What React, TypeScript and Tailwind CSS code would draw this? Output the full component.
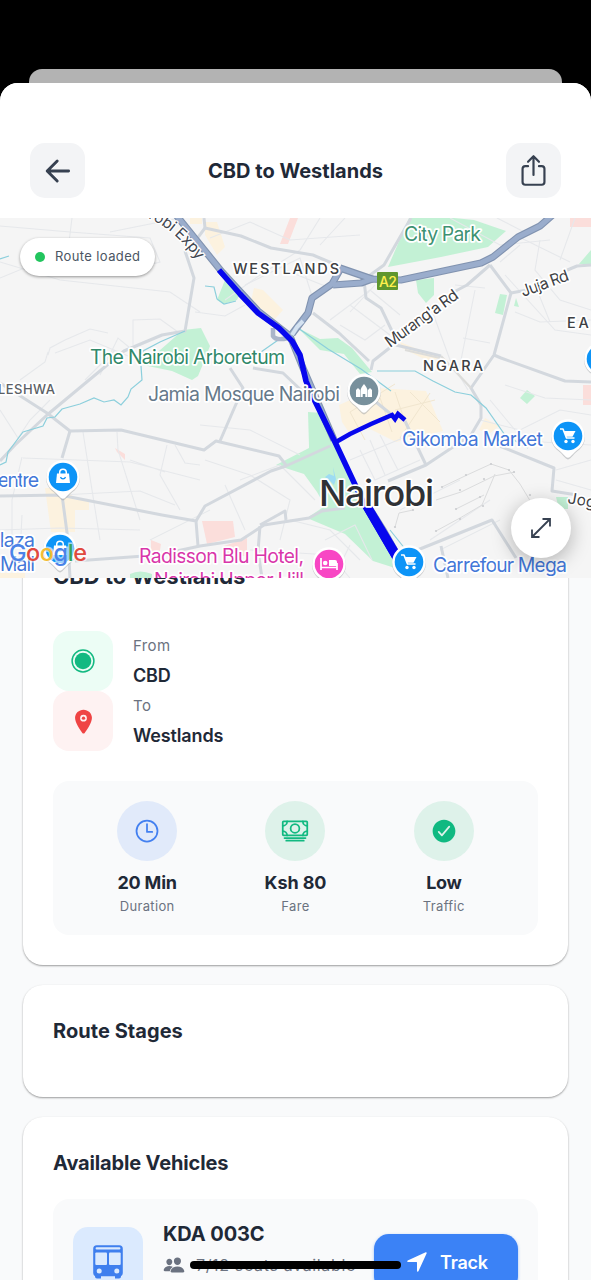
import React from "react";
import {
  IoShareOutline,
  IoLocation,
  IoTimeOutline,
  IoCashOutline,
  IoCheckmarkCircle,
  IoPeople,
  IoNavigate,
} from "react-icons/io5";

const MINOR_ROADS = [
  "M0 226 L70 232 L150 238 L160 262 L120 272",
  "M72 218 L68 250 L0 278",
  "M110 232 L180 218",
  "M0 262 L60 280 L170 292 L200 312",
  "M133 345 L133 320 L160 319 L178 332",
  "M48 355 L50 348 L65 340 L90 329 L108 333 M48 352 L45 362 L20 380",
  "M55 353 L90 340 L133 358 M100 375 L118 338 L135 352 M85 380 L115 350",
  "M0 410 L18 438 L30 420 L50 400",
  "M83 432 L92 490 L100 540 M117 432 L118 450 L140 520 M167 445 L160 475 L180 510",
  "M23 458 L130 462 L200 480 M130 460 L165 472",
  "M60 495 L140 491 L175 505 M20 555 L22 515 M0 530 L60 528 L140 530",
  "M175 445 L185 463 L200 465 M22 457 L12 500 L12 540",
  "M210 238 L250 222 L290 240 L360 235",
  "M225 300 L260 275 L300 250 L320 218",
  "M245 285 L300 258 L312 296 M285 270 L330 288",
  "M320 245 L345 218 M195 312 L225 316 L245 305",
  "M330 320 L370 290 L400 315 M350 305 L390 335 M340 325 L365 340 L385 325 M375 285 L350 312",
  "M450 218 L500 245 L550 240 M520 245 L500 262 M515 235 L570 262",
  "M540 240 L535 270 L560 300 L591 310 M505 275 L555 330 L591 335",
  "M515 312 L540 322 L591 320 M475 290 L465 340 L460 365 M535 285 L550 322",
  "M430 305 L450 360 L468 390 M463 338 L490 343 M455 285 L485 288",
  "M497 218 L530 235 M560 260 L575 218",
  "M200 425 L250 430 L300 455 M205 460 L250 475 L290 500 L280 540",
  "M225 485 L245 530 M240 480 L280 465 L315 500 M290 520 L330 530 L360 560",
  "M325 540 L355 525 L372 560 M335 575 L350 545",
  "M360 450 L375 480 L420 460 M370 440 L385 475 M380 435 L398 470 M350 460 L410 435",
  "M480 420 L520 430 L560 410 L591 415 M510 440 L591 445",
  "M556 470 L591 460 M556 480 L591 490",
  "M400 510 L460 480 M430 540 L490 500 M440 550 L500 520",
  "M505 385 L545 398 L591 400 M490 400 L515 430",
  "M250 550 L330 555 L350 578 M150 540 L210 510",
];

const SECONDARY_ROADS = [
  "M185 251 L194 278 L185 331 L162 335 L124 351 L47 415 L15 445 L0 461",
  "M0 383 L47 413 L70 431 L121 430 L204 450 L216 441 L279 456 L286 465",
  "M70 431 L62 458 M0 496 L60 495 L162 515 L196 521 L198 546",
  "M62 495 L68 540 L70 578",
  "M75 561 L158 555 L200 546 L241 540 L264 525 L309 518 L322 511 L345 508",
  "M196 521 L205 506 L271 471 L286 466 L330 446",
  "M220 441 L243 388 L230 368",
  "M253 368 L283 373 L302 391",
  "M204 218 L205 228 L241 236 L271 248 L313 255 L339 266",
  "M366 278 L384 265 L411 218 M205 228 L196 240",
  "M364 280 L366 298 L381 308 L392 331 M392 346 L373 361 L371 370",
  "M313 313 L339 333 L369 361",
  "M490 265 L467 285 L452 293",
  "M490 265 L511 293 L494 355 L471 388 L481 405 L481 418 L471 435 L426 465 L388 481",
  "M494 355 L501 358 L565 381 L591 382 M511 293 L527 290",
  "M396 345 L441 356 M565 271 L577 266 L591 265",
  "M497 445 L554 468 L552 491 L577 495",
  "M405 421 L426 465 M371 398 L392 415",
  "M415 551 L492 520 L516 558 M441 546 L448 578",
  "M260 526 L258 551 L262 578 M260 525 L285 511 L286 520",
];

const HIGHWAYS = [
  "M172 210 L222 272 L258 311 L290 336 L303 368 L334 440",
  "M292 334 L308 313 L312 298 L332 284 L341 268",
  "M333 285 L361 283 L372 279 L340 268",
  "M366 279 L401 280 L481 263 L493 257 L518 237 L540 226 L556 212",
];

function Pin({ x, y, color, children }: { x: number; y: number; color: string; children?: React.ReactNode }) {
  return (
    <g transform={`translate(${x} ${y})`}>
      <path d="M0 22.500 C-3 22 -6 16 -11.500 12.500 A17 17 0 1 1 11.500 12.500 C6 16 3 22 0 22.500Z" fill="#9da1a6" opacity=".5" transform="translate(0 1)" />
      <path d="M0 21.800 C-3 21.500 -6 16 -11.500 12.300 A16.800 16.800 0 1 1 11.500 12.300 C6 16 3 21.500 0 21.800Z" fill="#fff" />
      <circle r="14.300" fill={color} />
      {children}
    </g>
  );
}

function Cart() {
  return (
    <g>
      <path d="M-8 -7h3l3.500 9h8" fill="none" stroke="#fff" strokeWidth="1.600" strokeLinejoin="round" />
      <path d="M-4 -5h11.500l-3 5.800h-6.500z" fill="#fff" />
      <circle cx="-2" cy="5.500" r="1.700" fill="#fff" />
      <circle cx="5" cy="5.500" r="1.700" fill="#fff" />
    </g>
  );
}

function Bag() {
  return (
    <g>
      <path d="M-6 -3.500h12l1 9.500h-14z" fill="#fff" />
      <path d="M-3.300 -3v-1.500a3.300 3.300 0 0 1 6.600 0V-3" fill="none" stroke="#fff" strokeWidth="1.500" />
      <path d="M-2.500 0a2.600 2.600 0 0 0 5 0" fill="none" stroke="#0d8ff2" strokeWidth="1.200" />
    </g>
  );
}

function Label({ x, y, w, size, fill, children, weight = 400, rotate = 0 }: {
  x: number; y: number; w: number; size: number; fill: string; children: string; weight?: number; rotate?: number;
}) {
  return (
    <text
      x={x}
      y={y}
      textLength={w}
      fontSize={size}
      fontWeight={weight}
      fill={fill}
      stroke="#ffffff"
      strokeWidth="3.500"
      strokeLinejoin="round"
      paintOrder="stroke"
      transform={rotate ? `rotate(${rotate} ${x} ${y})` : undefined}
    >
      {children}
    </text>
  );
}

function MapCanvas() {
  return (
    <svg viewBox="0 218 591 360" className="block h-[360px] w-full font-['Inter',sans-serif]">
      <rect y="218" width="591" height="360" fill="#f5f5f5" />
      <g fill="#fcf2df">
        <path d="M205 222h12l8 25-8 8-12-20zM254 288l9 2 20 20-8 9-24-18zM339 405l38-17 49 3 17 40-47 11-28-14-18 6-8-12z" />
        <path d="M45 488h22l8 12v32h-24zM75 500h14v10h-14zM190 218h12v6h-12zM400 342l40 16-12 3-26-13zM485 418l14 8-10 8-10-4zM0 573h25v5H0z" />
      </g>
      <g fill="#fbdedb">
        <path d="M290 218h8l-10 26h-8zM202 521h31l2 16-28 7zM224 546l23-8v18h-25zM570 218h21v9h-21zM583 385h8v20h-8zM115 448l10 6v6l-8-8zM151 540l10 4-2 12h-8z" />
      </g>
      <g fill="#c3f1d5">
        <path d="M409 218h45l20 2 32 11-18 16-47 10-53 10zM591 250l-12 14h12z" />
        <path d="M416 280l18-2v17l-8 8-8-10zM500 294l7 1-4 20-8-2zM516 298l3 9-5-1z" />
        <path d="M143 365l40-35 18-2 9 18-7 18-5 12-6 4-20-9z" />
        <path d="M225 280l-8 20 6 4 14-4 3-6z" />
        <path d="M298 328l22 11 18-1 14 10 20 24-12 2-16-20-24-4z" />
        <path d="M308 412l14 1 35 74 22 43 16 30v8l-22-7-28-27-38-16 18-12-8-14-13-18-28-9 33-17V446z" />
        <path d="M527 390l8 6-8 8-7-6zM556 497h12v12h-9zM130 574q10-5 22 0v4h-22z" />
      </g>
      <path d="M333 467l1 9-5-2-4 3 5 4 4 4 2-6z" fill="#9ddcf3" />
      <g fill="none" stroke="#e6e8eb" strokeWidth="1.100">
        {MINOR_ROADS.map((d) => <path key={d} d={d} />)}
      </g>
      <g fill="none" stroke="#f1e6cf" strokeWidth="1">
        <path d="M365 440l-15-28 45-28M395 392l15 45M430 393l-30 45M378 392l14 40M410 392l30 30M395 410l40-10" />
      </g>
      <g fill="none" stroke="#d3d8de" strokeWidth="3" strokeLinejoin="round">
        {SECONDARY_ROADS.map((d) => <path key={d} d={d} />)}
      </g>
      <path d="M441 356L471 388M405 350L440 358" stroke="#dcdcda" strokeWidth="2.200" fill="none" />
      <g fill="none" stroke="#8ccfdc" strokeWidth="1.200">
        <path d="M185 331L160 342L143 351L141 366L142 380L131 389L128 397L121 405L114 400L104 402L94 398L80 404L62 409L55 417L47 418L43 426L23 432L8 452L6 462L0 465" />
        <path d="M0 259l9-3M205 286l9 1 3 12 7 5 12-3M261 352l20-14" />
        <path d="M298 328l30 21 33 20 30 22M377 371l38 0 18 10 22 11 16 3 15 13 19 27 23 13M390 530l16 20" />
      </g>
      <g stroke="#dbdcdd" fill="none" strokeWidth="1">
        <path d="M442 487l25-12 24-11 18 6 11 14 12 20M436 500l25-8 33-16 21-4M456 509l28-14M436 531l24-13 22-13 13-31" />
        <path d="M395 527l4-14 14-3" />
      </g>
      <g fill="#cbcdd0">
        {[[442, 487], [466, 475], [491, 464], [509, 470], [460, 490], [484, 479], [456, 509], [480, 497], [436, 531], [460, 519], [483, 506], [514, 472], [530, 495], [395, 527], [413, 510]].map(([cx, cy]) => (
          <circle key={`${cx}-${cy}`} cx={cx} cy={cy} r="1.100" />
        ))}
      </g>
      <g fill="none">
        <path d="M273 328V336Q276 341 288 338" stroke="#a9b5c9" strokeWidth="4.500" />
        <path d="M366 500L385 530L399 555" stroke="#8fa1bd" strokeWidth="4" />
      </g>
      <g fill="none" stroke="#8193b0" strokeWidth="7.200" strokeLinejoin="round">
        {HIGHWAYS.map((d) => <path key={d} d={d} />)}
      </g>
      <g fill="none" stroke="#9aadcc" strokeWidth="5" strokeLinejoin="round">
        {HIGHWAYS.map((d) => <path key={d} d={d} />)}
      </g>
      <path d="M292 335l5-8 6-6" stroke="#d4e2f1" strokeWidth="4" fill="none" />

      <g fill="none" stroke="#0707ee" strokeLinejoin="round">
        <path d="M219 270L240 294L258 313L279 328L292 341L300 355L306 381L311 393L335 442L366 508L396 559" strokeWidth="5.600" />
        <path d="M336 442L350 434L371 424L392 415L395 419L398 414L405 420" strokeWidth="4.600" strokeLinejoin="miter" />
      </g>
      <path d="M363 508L372 506L399 551L393 560Z" fill="#0707ee" />

      <rect x="377" y="272" width="21" height="18" rx="1" fill="#5f962e" />
      <text x="379" y="286.500" fontSize="14" fontWeight="500" textLength="18" fill="#fff04d">A2</text>

      <path id="expressway-label" d="M148 218Q176 230 200 264" fill="none" />
      <text fontSize="15.500" fill="#3f4650" stroke="#fff" strokeWidth="2.500" paintOrder="stroke">
        <textPath href="#expressway-label" textLength="66">robi Expy</textPath>
      </text>
      <Label x={404} y={241} w={77} size={19.5} fill="#3d9272">City Park</Label>
      <Label x={233} y={274} w={106} size={14.5} fill="#3d4043" weight={500}>WESTLANDS</Label>
      <Label x={423} y={371} w={60} size={14.5} fill="#3d4043" weight={500}>NGARA</Label>
      <Label x={567} y={328} w={34} size={14.5} fill="#3d4043" weight={500}>EAS</Label>
      <Label x={-2} y={394} w={57} size={13} fill="#5b6065" weight={500}>LESHWA</Label>
      <Label x={390} y={348} w={86} size={16} fill="#3d4043" rotate={-36}>Murang'a Rd</Label>
      <Label x={523} y={297} w={50} size={16} fill="#3d4043" rotate={-20}>Juja Rd</Label>
      <Label x={567} y={503} w={28} size={15.5} fill="#3d4043" rotate={10}>Jog</Label>
      <Label x={90} y={364} w={195} size={19.5} fill="#31896a">The Nairobi Arboretum</Label>
      <Label x={148} y={401} w={192} size={19.5} fill="#66798a">Jamia Mosque Nairobi</Label>
      <Label x={319} y={506} w={115} size={36} fill="#303236" weight={500}>Nairobi</Label>

      <Pin x={364} y={391} color="#78909c">
        <path d="M-8 6V-1l2-2 2 2v7zM4 6V-1l2-2 2 2v7zM-3.500 6V0q0-3 3.500-7q3.500 4 3.500 7v6H1.300V3h-2.600v3z" fill="#fff" />
      </Pin>
      <Label x={402} y={446} w={141} size={19.5} fill="#4377d8">Gikomba Market</Label>
      <Pin x={568} y={436} color="#0d94f7"><Cart /></Pin>
      <Pin x={601} y={359} color="#0d94f7" />
      <Label x={-15} y={487} w={54} size={19.5} fill="#4377d8">Centre</Label>
      <Pin x={63} y={477} color="#0d94f7"><Bag /></Pin>
      <Pin x={60} y={549} color="#0d94f7"><Bag /></Pin>
      <Label x={-12} y={547} w={47} size={19.5} fill="#4377d8">Plaza</Label>
      <Label x={0} y={571} w={35} size={19.5} fill="#4377d8">Mall</Label>
      <Label x={139} y={563} w={165} size={19.5} fill="#d936aa">Radisson Blu Hotel,</Label>
      <Label x={154} y={587} w={150} size={19.5} fill="#d936aa">Nairobi Upper Hill</Label>
      <Pin x={329} y={564} color="#f846c4">
        <path d="M-8 -6v12M-8 3.500H8M8 6V-1" stroke="#fff" strokeWidth="1.700" fill="none" />
        <path d="M0 -4h6q2 0 2 2v4H0z" fill="#fff" />
        <circle cx="-3.800" cy="-1" r="2.300" fill="#fff" />
      </Pin>
      <Pin x={409} y={562} color="#0d94f7"><Cart /></Pin>
      <Label x={433} y={572} w={134} size={19.5} fill="#4377d8">Carrefour Mega</Label>

      <text x="9" y="561" fontSize="23.500" fontWeight="500" textLength="78" stroke="#fff" strokeOpacity=".6" strokeWidth="3" paintOrder="stroke">
        <tspan fill="#4b83e8">G</tspan>
        <tspan fill="#e14a3f">o</tspan>
        <tspan fill="#f2bd35">o</tspan>
        <tspan fill="#4b83e8">g</tspan>
        <tspan fill="#39a45a">l</tspan>
        <tspan fill="#e14a3f">e</tspan>
      </text>
    </svg>
  );
}

function BusIcon() {
  return (
    <svg viewBox="0 0 32 36" className="h-9 w-8">
      <rect x="1.200" y="1.200" width="29.600" height="31" rx="3.500" fill="#3f7fee" />
      <rect x="3.600" y="3.300" width="24.800" height="2.100" rx="1" fill="#dbeafe" />
      <rect x="3.300" y="8.400" width="11.700" height="12.700" rx="1" fill="#dbeafe" />
      <rect x="17" y="8.400" width="11.700" height="12.700" rx="1" fill="#dbeafe" />
      <circle cx="7.200" cy="27" r="2.500" fill="#dbeafe" />
      <circle cx="24.800" cy="27" r="2.500" fill="#dbeafe" />
      <path d="M3 31h6v3.500H5a2 2 0 0 1-2-2zM23 31h6v1.500a2 2 0 0 1-2 2h-4z" fill="#3f7fee" />
    </svg>
  );
}

const STATS = [
  { value: "20 Min", label: "Duration", tile: "bg-[#e1eafa]", icon: <IoTimeOutline className="size-[28px] text-[#4380f0]" />, v: "tracking-[-0.2px]" },
  { value: "Ksh 80", label: "Fare", tile: "bg-[#def2ea]", icon: <IoCashOutline className="size-[28px] text-[#12b981]" />, v: "tracking-[-0.1px]" },
  { value: "Low", label: "Traffic", tile: "bg-[#def2ea]", icon: <IoCheckmarkCircle className="size-[28px] text-[#10b981]" />, v: "tracking-[-0.3px]" },
];

const CARD = "rounded-[20px] bg-white px-[30px] shadow-[0_1px_2px_rgba(0,0,0,0.38)]";

export default function App() {
  return (
    <div className="relative flex h-[1280px] w-full flex-col overflow-hidden bg-black font-['Inter',sans-serif] text-[#1f2937]">
      <div className="mx-[29px] mt-[69px] h-[14px] shrink-0 rounded-t-[13px] bg-[#b3b3b3]" />
      <div className="flex min-h-0 flex-1 flex-col overflow-hidden rounded-t-[18px] bg-[#f9fafb]">
        <header className="flex h-[135px] shrink-0 items-end justify-between bg-white px-[30px] pb-5">
          <button className="flex size-[55px] items-center justify-center rounded-[15px] bg-[#f3f4f6]">
            <svg viewBox="0 0 30 30" className="size-[30px]" fill="none" stroke="#374151" strokeWidth="2.900" strokeLinecap="round" strokeLinejoin="round">
              <path d="M14.200 5L4.200 15L14.200 25M5 15H25.600" />
            </svg>
          </button>
          <h1 className="pb-[12px] text-[20px] leading-[30px] font-bold">CBD to Westlands</h1>
          <button className="flex size-[55px] items-center justify-center rounded-[15px] bg-[#f3f4f6]">
            <IoShareOutline className="size-[35px] text-[#374151]" />
          </button>
        </header>

        <section className="relative h-[360px] shrink-0 overflow-hidden">
          <MapCanvas />
          <div className="absolute top-5 left-5 flex h-[38px] w-[135px] items-center gap-[10px] rounded-full bg-white pl-[15px] shadow-[0_1px_3px_rgba(0,0,0,0.4)]">
            <span className="size-[10px] rounded-full bg-[#22c55e]" />
            <span className="text-[13px] tracking-[0.38px] whitespace-nowrap text-[#4b5563]">Route loaded</span>
          </div>
          <button className="absolute right-5 bottom-5 flex size-[60px] items-center justify-center rounded-full bg-white shadow-[0_5px_20px_rgba(0,0,0,0.28)]">
            <svg viewBox="0 0 24 24" className="size-6" fill="none" stroke="#374151" strokeWidth="1.800">
              <path d="M3 21L21 3M13.500 3H21v7.500M3 13.500V21h7.500" />
            </svg>
          </button>
        </section>

        <main className="min-h-0 flex-1 overflow-hidden px-[23px]">
          <section className={`${CARD} -mt-[47px] pt-[30px] pb-[30px]`}>
            <h2 className="h-[70px] text-[22px] leading-[30px] font-bold">CBD to Westlands</h2>
            <div className="flex h-[60px] items-center gap-5">
              <div className="flex size-[60px] items-center justify-center rounded-[16px] bg-[#ecfdf5]">
                <svg viewBox="0 0 24 24" className="size-6">
                  <circle cx="12" cy="12" r="10.900" fill="none" stroke="#12b981" strokeWidth="1.500" />
                  <circle cx="12" cy="12" r="8.300" fill="#12b981" />
                </svg>
              </div>
              <div className="flex h-full flex-col justify-between">
                <p className="text-[15px] leading-[29px] tracking-[0.4px] text-[#6b7280]">From</p>
                <p className="text-[18px] leading-[30px] font-semibold tracking-[-0.15px]">CBD</p>
              </div>
            </div>
            <div className="flex h-[60px] items-center gap-5">
              <div className="flex size-[60px] items-center justify-center rounded-[16px] bg-[#fef2f2]">
                <IoLocation className="size-[27px] text-[#ef4444]" />
              </div>
              <div className="flex h-full flex-col justify-between">
                <p className="text-[15px] leading-[29px] tracking-[0.4px] text-[#6b7280]">To</p>
                <p className="text-[18px] leading-[30px] font-semibold tracking-[-0.15px]">Westlands</p>
              </div>
            </div>
            <div className="mt-[30px] grid h-[154px] grid-cols-3 rounded-[16px] bg-[#f9fafb] px-5 pt-5">
              {STATS.map((s) => (
                <div key={s.label} className="flex flex-col items-center">
                  <div className={`flex size-[60px] items-center justify-center rounded-full ${s.tile}`}>{s.icon}</div>
                  <p className={`mt-[10px] text-[18px] leading-6 font-bold ${s.v}`}>{s.value}</p>
                  <p className="mt-px text-[13px] leading-5 tracking-[0.35px] text-[#6b7280]">{s.label}</p>
                </div>
              ))}
            </div>
          </section>

          <section className={`${CARD} mt-5 h-[112px] pt-[31px]`}>
            <h2 className="text-[20px] leading-[30px] font-bold tracking-[0.05px]">Route Stages</h2>
          </section>

          <section className={`${CARD} mt-5 h-[300px] pt-[31px]`}>
            <h2 className="text-[20px] leading-[30px] font-bold tracking-[-0.15px]">Available Vehicles</h2>
            <div className="mt-[21px] flex h-[126px] items-center rounded-[16px] bg-[#f9fafb] px-5">
              <div className="flex size-[70px] items-center justify-center rounded-[15px] bg-[#dbeafe]">
                <BusIcon />
              </div>
              <div className="ml-5 flex h-[70px] flex-1 flex-col">
                <p className="-mt-[8px] text-[20px] leading-[30px] font-bold tracking-[-0.1px]">KDA 003C</p>
                <div className="mt-1 flex w-[190px] items-center gap-[11px] text-[#6b7280]">
                  <IoPeople className="size-[22px] shrink-0" />
                  <span className="text-[16px] leading-6 tracking-[0.65px] whitespace-nowrap">7/12 seats available</span>
                </div>
              </div>
              <button className="flex h-[57px] w-[144px] items-center gap-[11px] rounded-[15px] bg-[#3b82f6] pl-[31px] text-white shadow-[0_1px_3px_rgba(59,130,246,0.5)]">
                <IoNavigate className="size-6" />
                <span className="text-[18px] font-semibold tracking-[-0.2px]">Track</span>
              </button>
            </div>
          </section>
        </main>
      </div>
      <div className="absolute bottom-[11px] left-[190px] h-[8px] w-[211px] rounded-full bg-black" />
    </div>
  );
}
